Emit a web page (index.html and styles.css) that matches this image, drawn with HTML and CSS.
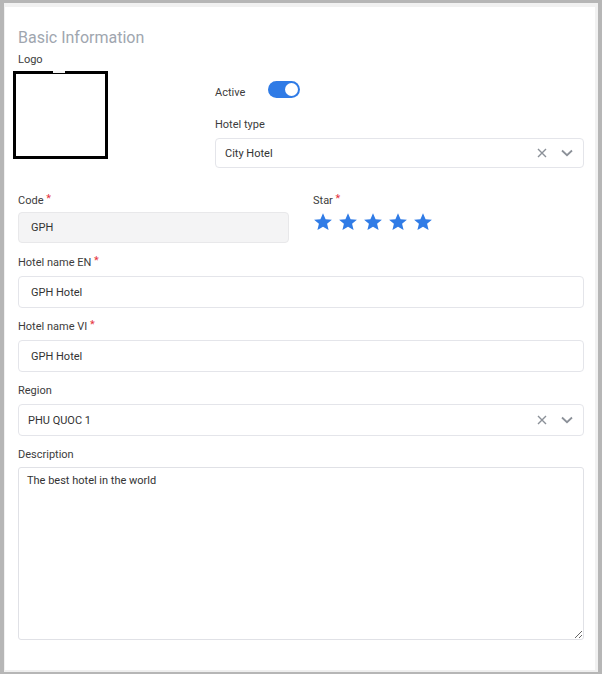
FILE: index.html
```html
<!DOCTYPE html>
<html>
<head>
<meta charset="utf-8">
<link rel="stylesheet" href="styles.css">
</head>
<body>
<div class="panel">
  <h2 class="title">Basic Information</h2>
  <div class="top-row">
    <div class="logo-col">
      <div class="label">Logo</div>
      <div class="logo-box"><span class="logo-notch"></span></div>
    </div>
    <div class="meta-col">
      <div class="active-row">
        <span class="label active-label">Active</span>
        <span class="toggle"><span class="knob"></span></span>
      </div>
      <div class="field">
        <div class="label">Hotel type</div>
        <div class="control select short">
          <span class="value">City Hotel</span>
          <span class="icons">
            <svg width="10" height="10" viewBox="0 0 10 10"><path d="M1 1L9 9M9 1L1 9" stroke="#8b9098" stroke-width="1.4" fill="none"/></svg>
            <svg width="12" height="8" viewBox="0 0 12 8"><path d="M1 1.5L6 6.2L11 1.5" stroke="#8b9098" stroke-width="1.8" fill="none"/></svg>
          </span>
        </div>
      </div>
    </div>
  </div>

  <div class="two-col">
    <div class="field code-field">
      <div class="label">Code <span class="req">*</span></div>
      <div class="control disabled"><span class="value pad12">GPH</span></div>
    </div>
    <div class="field">
      <div class="label">Star <span class="req">*</span></div>
      <div class="stars">
        <svg class="star" viewBox="0 0 24 24"><path d="M12 1.5l3.1 7.1 7.6.6-5.8 5 1.8 7.5L12 17.7l-6.7 4 1.8-7.5-5.8-5 7.6-.6z"/></svg>
        <svg class="star" viewBox="0 0 24 24"><path d="M12 1.5l3.1 7.1 7.6.6-5.8 5 1.8 7.5L12 17.7l-6.7 4 1.8-7.5-5.8-5 7.6-.6z"/></svg>
        <svg class="star" viewBox="0 0 24 24"><path d="M12 1.5l3.1 7.1 7.6.6-5.8 5 1.8 7.5L12 17.7l-6.7 4 1.8-7.5-5.8-5 7.6-.6z"/></svg>
        <svg class="star" viewBox="0 0 24 24"><path d="M12 1.5l3.1 7.1 7.6.6-5.8 5 1.8 7.5L12 17.7l-6.7 4 1.8-7.5-5.8-5 7.6-.6z"/></svg>
        <svg class="star" viewBox="0 0 24 24"><path d="M12 1.5l3.1 7.1 7.6.6-5.8 5 1.8 7.5L12 17.7l-6.7 4 1.8-7.5-5.8-5 7.6-.6z"/></svg>
      </div>
    </div>
  </div>

  <div class="field">
    <div class="label">Hotel name EN <span class="req">*</span></div>
    <div class="control"><span class="value pad12">GPH Hotel</span></div>
  </div>

  <div class="field">
    <div class="label">Hotel name VI <span class="req">*</span></div>
    <div class="control"><span class="value pad12">GPH Hotel</span></div>
  </div>

  <div class="field">
    <div class="label">Region</div>
    <div class="control select">
      <span class="value">PHU QUOC 1</span>
      <span class="icons">
        <svg width="10" height="10" viewBox="0 0 10 10"><path d="M1 1L9 9M9 1L1 9" stroke="#8b9098" stroke-width="1.4" fill="none"/></svg>
        <svg width="12" height="8" viewBox="0 0 12 8"><path d="M1 1.5L6 6.2L11 1.5" stroke="#8b9098" stroke-width="1.8" fill="none"/></svg>
      </span>
    </div>
  </div>

  <div class="field">
    <div class="label">Description</div>
    <textarea class="textarea" readonly>The best hotel in the world</textarea>
  </div>
</div>
</body>
</html>
```

FILE: styles.css
```css
* { box-sizing: border-box; }
html, body { margin: 0; padding: 0; }
body {
  background: #b6b6b6;
  padding: 3px 4px 2px 4px;
  font-family: Roboto, "Noto Sans", sans-serif;
  color: #3a3a3a;
}
.panel {
  background: #fff;
  height: 669px;
  border-top: 4px solid #f1f1f1;
  border-left: 1px solid #f1f1f1;
  border-right: 3px solid #f1f1f1;
  border-bottom: 2px solid #efefef;
  padding: 21px 11px 0 13px;
}
.title {
  margin: 0 0 5px 0;
  font-size: 16px;
  line-height: 20px;
  font-weight: 400;
  color: #a0a6af;
}
.label {
  font-size: 11px;
  line-height: 14px;
  color: #3c3c3c;
}
.req { color: #e5323e; font-size: 11px; position: relative; top: -2px; }
.top-row {
  display: flex;
  gap: 24px;
}
.logo-col { width: 173px; }
.logo-box {
  position: relative;
  margin: 4px 0 0 -5px;
  width: 95px;
  height: 88px;
  border: 3px solid #000;
  background: #fff;
}
.logo-notch {
  position: absolute;
  top: -3px;
  left: 37px;
  width: 12px;
  height: 2px;
  background: #f6f6f6;
}
.meta-col { flex: 1; padding-top: 27px; }
.active-row {
  display: flex;
  align-items: flex-end;
  height: 18px;
  margin-bottom: 20px;
}
.active-label { width: 53px; margin-bottom: -2px; }
.toggle {
  position: relative;
  width: 32px;
  height: 17px;
  border-radius: 9px;
  background: #2f7be6;
  display: flex;
  align-items: center;
  justify-content: flex-end;
  padding-right: 2px;
}
.knob {
  width: 13px;
  height: 13px;
  border-radius: 50%;
  background: #fff;
}
.field { margin-bottom: 11px; }
.field .label { padding-top: 1px; margin-bottom: 6px; }
.meta-col .field { margin-bottom: 0; }
.meta-col .field .label { padding-top: 0; margin-bottom: 6px; }
.control {
  height: 32px;
  border: 1px solid #e4e5ea;
  border-radius: 4px;
  display: flex;
  align-items: center;
  font-size: 11px;
  color: #333;
  background: #fff;
}
.control.short { height: 30px; }
.control .value { padding-left: 9px; flex: 1; }
.control .value.pad12 { padding-left: 12px; }
.control.disabled { background: #f4f4f5; border-color: #e8e8ea; height: 31px; }
.code-field { margin-bottom: 12px; }
.code-field .label { margin-bottom: 4px; }
.select .icons {
  display: flex;
  align-items: center;
  gap: 14px;
  padding-right: 10px;
}
.two-col {
  display: grid;
  grid-template-columns: 1fr 1fr;
  gap: 24px;
  margin-top: 25px;
}
.stars { display: flex; gap: 5px; margin-top: -2px; }
.star { width: 20px; height: 20px; fill: #2f7be6; }
.textarea {
  display: block;
  width: 100%;
  height: 173px;
  border: 1px solid #e0e1e6;
  border-radius: 3px;
  padding: 6px 8px;
  font-family: Roboto, "Noto Sans", sans-serif;
  font-size: 11px;
  line-height: 14px;
  color: #333;
  resize: both;
  outline: none;
  margin-top: -1px;
}
```
